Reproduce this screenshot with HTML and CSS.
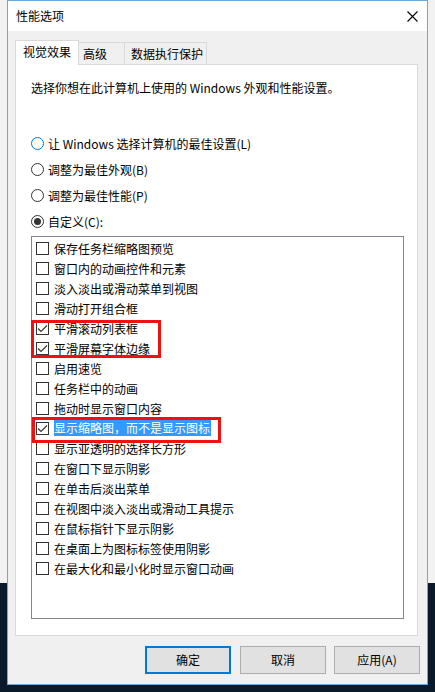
FILE: index.html
```html
<!DOCTYPE html>
<html lang="zh-CN">

<head>
    <meta charset="UTF-8">
    <title>性能选项</title>
    <link rel="stylesheet" href="styles.css">
</head>

<body>
    <div class="window">
        <!-- Title bar -->
        <div class="titlebar">
            <span class="title">性能选项</span>
            <svg class="close" width="11" height="11" viewBox="0 0 11 11">
                <path d="M0.5 0.5L10.5 10.5M10.5 0.5L0.5 10.5" stroke="#000" stroke-width="1.1" fill="none"/>
            </svg>
        </div>

        <div class="content">
            <div class="tabs">
                <div class="tab tab-active">视觉效果</div>
                <div class="tab tab-adv">高级</div>
                <div class="tab tab-dep">数据执行保护</div>
            </div>

            <div class="panel">
                <p class="desc">选择你想在此计算机上使用的 Windows 外观和性能设置。</p>

                <div class="options">
                    <div class="radio radio-focus"><span class="radio-btn"></span>让 Windows 选择计算机的最佳设置(L)</div>
                    <div class="radio"><span class="radio-btn"></span>调整为最佳外观(B)</div>
                    <div class="radio"><span class="radio-btn"></span>调整为最佳性能(P)</div>
                    <div class="radio radio-on"><span class="radio-btn"></span>自定义(C):</div>
                </div>

                <div class="listbox">
                    <div class="item"><span class="check"></span>保存任务栏缩略图预览</div>
                    <div class="item"><span class="check"></span>窗口内的动画控件和元素</div>
                    <div class="item"><span class="check"></span>淡入淡出或滑动菜单到视图</div>
                    <div class="item"><span class="check"></span>滑动打开组合框</div>
                    <div class="item"><span class="check"><svg width="11" height="11" viewBox="0 0 11 11"><path d="M1 5.5L4 8.5L10 2.5" stroke="#333" stroke-width="1.1" fill="none"/></svg></span>平滑滚动列表框</div>
                    <div class="item"><span class="check"><svg width="11" height="11" viewBox="0 0 11 11"><path d="M1 5.5L4 8.5L10 2.5" stroke="#333" stroke-width="1.1" fill="none"/></svg></span>平滑屏幕字体边缘</div>
                    <div class="item"><span class="check"></span>启用速览</div>
                    <div class="item"><span class="check"></span>任务栏中的动画</div>
                    <div class="item"><span class="check"></span>拖动时显示窗口内容</div>
                    <div class="item"><span class="check"><svg width="11" height="11" viewBox="0 0 11 11"><path d="M1 5.5L4 8.5L10 2.5" stroke="#333" stroke-width="1.1" fill="none"/></svg></span><span class="sel">显示缩略图，而不是显示图标</span></div>
                    <div class="item"><span class="check"></span>显示亚透明的选择长方形</div>
                    <div class="item"><span class="check"></span>在窗口下显示阴影</div>
                    <div class="item"><span class="check"></span>在单击后淡出菜单</div>
                    <div class="item"><span class="check"></span>在视图中淡入淡出或滑动工具提示</div>
                    <div class="item"><span class="check"></span>在鼠标指针下显示阴影</div>
                    <div class="item"><span class="check"></span>在桌面上为图标标签使用阴影</div>
                    <div class="item"><span class="check"></span>在最大化和最小化时显示窗口动画</div>

                    <!-- annotation boxes drawn over the list -->
                    <div class="mark mark-smooth"></div>
                    <div class="mark mark-thumb"></div>
                </div>
            </div>

            <div class="buttons">
                <div class="btn btn-default">确定</div>
                <div class="btn btn-cancel">取消</div>
                <div class="btn btn-apply">应用(A)</div>
            </div>
        </div>
    </div>
</body>

</html>
```

FILE: styles.css
```css
/* Reset */
* {
    margin: 0;
    padding: 0;
    box-sizing: border-box;
}

body {
    width: 435px;
    height: 692px;
    overflow: hidden;
    padding-left: 7px;
    background: linear-gradient(to bottom, #f2f2f2 0, #f2f2f2 583px, #0b1a2b 583px);
    font-family: "Noto Sans CJK SC", "Noto Sans", sans-serif;
    font-size: 12px;
    color: #000;
}

/* Dialog window */
.window {
    width: 421px;
    height: 685px;
    border: 1px solid #6aa9dd;
    background: #f0f0f0;
}

.titlebar {
    height: 30px;
    background: #fff;
    display: flex;
    align-items: center;
    justify-content: space-between;
    padding: 0 9px 0 8px;
}

.title {
    line-height: 30px;
}

.close {
    display: block;
}

.content {
    padding: 9px 7px 0;
}

/* Tabs */
.tabs {
    display: flex;
    align-items: flex-end;
    height: 24px;
}

.tab {
    height: 22px;
    line-height: 21px;
    border: 1px solid #d9d9d9;
    border-left: none;
    border-bottom: none;
    background: #f0f0f0;
    white-space: nowrap;
}

.tab-active {
    position: relative;
    z-index: 1;
    width: 64px;
    height: 25px;
    margin-bottom: -1px;
    padding-left: 7px;
    line-height: 22px;
    border-left: 1px solid #d9d9d9;
    background: #fff;
}

.tab-adv {
    width: 46px;
    padding-left: 4px;
}

.tab-dep {
    width: 82px;
    padding-left: 6px;
}

/* Tab panel */
.panel {
    width: 403px;
    height: 572px;
    border: 1px solid #d9d9d9;
    background: #fff;
    padding: 15px 0 0 15px;
}

.desc {
    line-height: 16px;
}

.options {
    margin-top: 39px;
    display: flex;
    flex-direction: column;
    gap: 10px;
}

.radio {
    display: flex;
    align-items: center;
    height: 16px;
    white-space: nowrap;
}

.radio-btn {
    width: 13px;
    height: 13px;
    margin-right: 4px;
    border: 1px solid #333;
    border-radius: 50%;
    display: flex;
    align-items: center;
    justify-content: center;
    flex-shrink: 0;
}

.radio-focus .radio-btn {
    border-color: #0078d7;
}

.radio-on .radio-btn::after {
    content: "";
    width: 7px;
    height: 7px;
    border-radius: 50%;
    background: #333;
}

/* Checked list */
.listbox {
    position: relative;
    width: 373px;
    height: 383px;
    margin-top: 7px;
    border: 1px solid #828790;
    padding: 1px 0 0 4px;
}

.item {
    height: 20px;
    display: flex;
    align-items: center;
    white-space: nowrap;
}

.check {
    width: 13px;
    height: 13px;
    margin-right: 5px;
    border: 1px solid #333;
    background: #fff;
    flex-shrink: 0;
}

.check svg {
    display: block;
}

.sel {
    background: #3399ff;
    color: #fff;
    line-height: 16px;
    padding-right: 1px;
}

/* Red annotation boxes */
.mark {
    position: absolute;
    border: 3px solid #f01010;
}

.mark-smooth {
    left: -1px;
    top: 83px;
    width: 130px;
    height: 38px;
}

.mark-thumb {
    left: 0;
    top: 180px;
    width: 189px;
    height: 26px;
}

/* Buttons */
.buttons {
    display: flex;
    justify-content: flex-end;
    margin-top: 10px;
}

.btn {
    width: 86px;
    height: 28px;
    line-height: 26px;
    text-align: center;
    border: 1px solid #adadad;
    background: #e1e1e1;
}

.btn-default {
    border: 2px solid #0078d7;
    line-height: 24px;
}

.btn-cancel {
    margin-left: 9px;
}

.btn-apply {
    margin-left: 8px;
}
```
